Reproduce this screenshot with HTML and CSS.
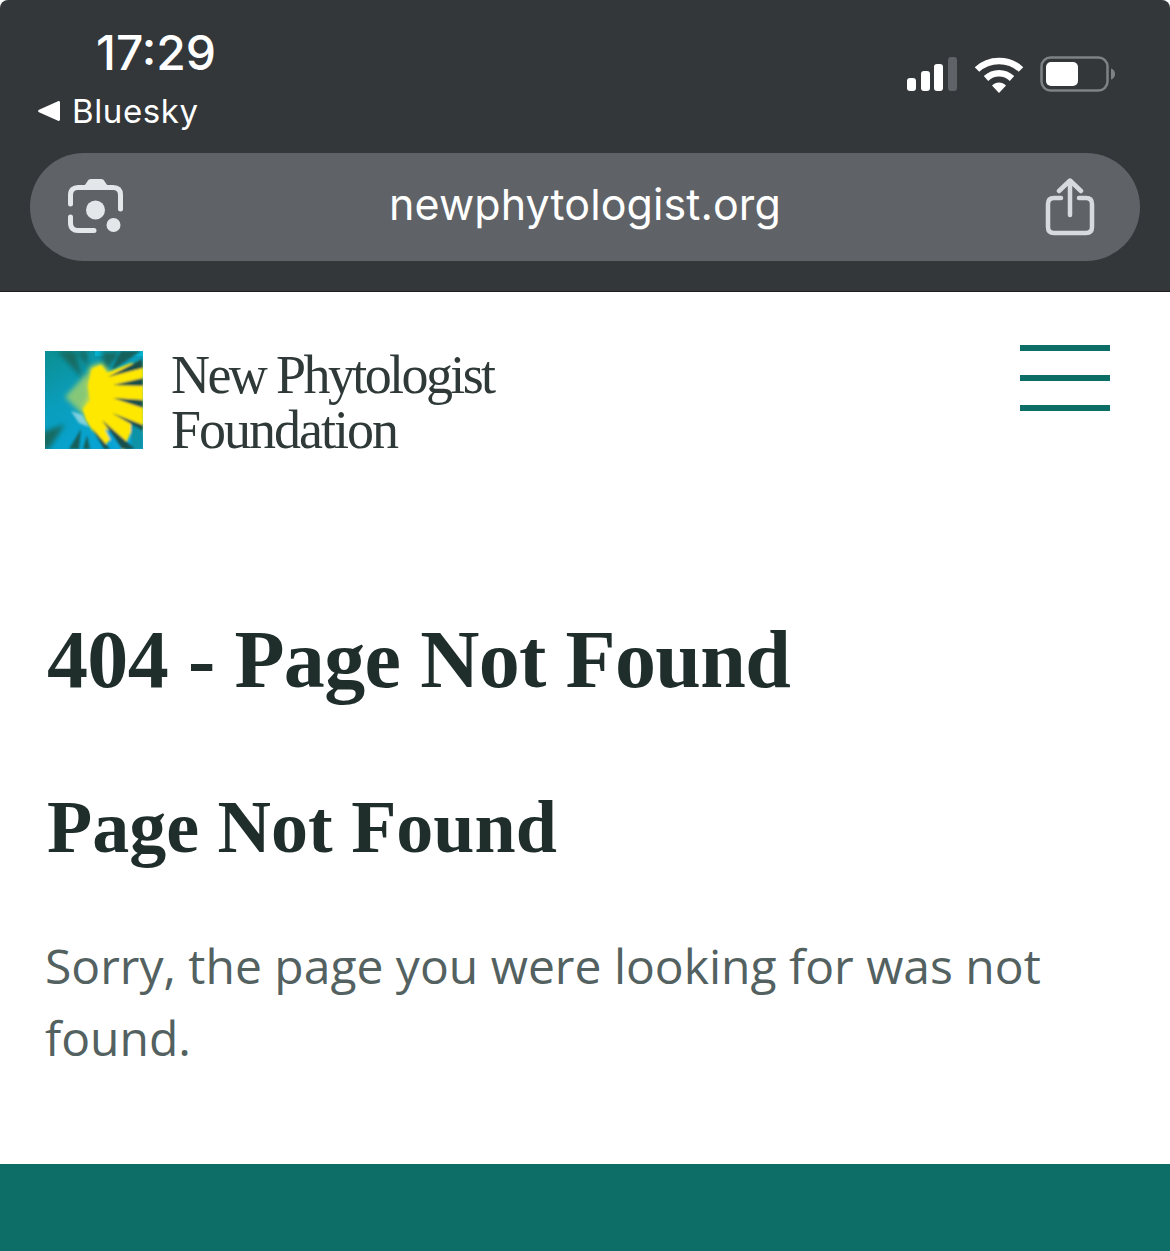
FILE: index.html
```html
<!DOCTYPE html>
<html lang="en">
<head>
  <meta charset="UTF-8">
  <title>Page Not Found</title>
  <meta name="viewport" content="width=device-width, initial-scale=1">
  <link rel="stylesheet" href="styles.css">
</head>
<body>
  <div class="browser">
    <div class="status">
      <div class="status-left">
        <div class="time">17:29</div>
        <div class="back">
          <svg class="back-arrow" width="22" height="22" viewBox="0 0 22 22"><path d="M22 2.500v17c0 1.200-1 1.800-2 1.300L1 12.200c-1.200-.6-1.200-1.800 0-2.400L20 1.200c1-.5 2 .1 2 1.300z" fill="#fff"/></svg>
          <span>Bluesky</span>
        </div>
      </div>
      <div class="status-right">
        <svg width="52" height="36" viewBox="0 0 52 36">
          <rect x="1" y="22" width="9" height="13" rx="3" fill="#fff"/>
          <rect x="15" y="15" width="9" height="20" rx="3" fill="#fff"/>
          <rect x="28" y="8" width="9" height="27" rx="3" fill="#fff"/>
          <rect x="42" y="1" width="9" height="34" rx="3" fill="#5f6367"/>
        </svg>
        <svg class="wifi" width="50" height="38" viewBox="0 0 50 38">
          <path d="M3 13.500C15 2 35 2 47 13.500" fill="none" stroke="#fff" stroke-width="6.500"/>
          <path d="M12 22.500C19.500 15.500 30.500 15.500 38 22.500" fill="none" stroke="#fff" stroke-width="6.500"/>
          <path d="M18 29.500C22 25.500 28 25.500 32 29.500L25 37z" fill="#fff"/>
        </svg>
        <svg class="battery" width="76" height="36" viewBox="0 0 76 36">
          <rect x="1.500" y="1.500" width="66" height="33" rx="9" fill="none" stroke="#7e8285" stroke-width="2.500"/>
          <rect x="6" y="6" width="32" height="24" rx="5" fill="#fff"/>
          <path d="M71 12.500c2.500.6 4 2.800 4 5.500s-1.500 4.900-4 5.500z" fill="#7e8285"/>
        </svg>
      </div>
    </div>
    <div class="address">
      <svg width="58" height="56" viewBox="0 0 58 56">
        <path d="M15 10l5-7c1-2 2-3 4-3h10c2 0 3 1 4 3l5 7z" fill="#e4e7ea"/>
        <path d="M3.500 25V16c0-5 3-7.500 7.500-7.500h35c5 0 7.500 2.500 7.500 7.500v14" fill="none" stroke="#e4e7ea" stroke-width="5" stroke-linecap="round"/>
        <path d="M3.500 38v6c0 5 3 7.500 7.500 7.500h16" fill="none" stroke="#e4e7ea" stroke-width="5" stroke-linecap="round"/>
        <circle cx="28.500" cy="31" r="9.500" fill="#e4e7ea"/>
        <circle cx="46.500" cy="46" r="7" fill="#e4e7ea"/>
      </svg>
      <span class="url">newphytologist.org</span>
      <svg width="50" height="58" viewBox="0 0 50 58">
        <path d="M16 20H9c-4 0-6 2-6 6v23c0 4 2 6 6 6h32c4 0 6-2 6-6V26c0-4-2-6-6-6h-7" fill="none" stroke="#d6d9de" stroke-width="4.500" stroke-linecap="round"/>
        <path d="M25 37V3M14 13L25 2.500 36 13" fill="none" stroke="#d6d9de" stroke-width="4.500" stroke-linecap="round" stroke-linejoin="round"/>
      </svg>
    </div>
  </div>

  <header class="site-head">
    <a class="brand" href="#">
      <svg class="logo" width="98" height="98" viewBox="0 0 98 98">
        <defs>
          <linearGradient id="sky" x1="0" y1="0" x2=".6" y2="1">
            <stop offset="0" stop-color="#0c8f90"/>
            <stop offset=".45" stop-color="#0a9dbb"/>
            <stop offset="1" stop-color="#07a5d6"/>
          </linearGradient>
          <filter id="soft"><feGaussianBlur stdDeviation="1.300"/></filter>
          <filter id="softer"><feGaussianBlur stdDeviation="2.800"/></filter>
          <clipPath id="square"><rect width="98" height="98"/></clipPath>
        </defs>
        <g clip-path="url(#square)">
          <rect width="98" height="98" fill="url(#sky)"/>
          <rect x="50" width="48" height="5" fill="#06b4d2"/>
          <g filter="url(#softer)" fill="#176a62">
            <path d="M12 0h18l8 28z"/>
            <path d="M32 0h10l1 18z"/>
            <path d="M56 0h22L60 20z"/>
            <path d="M-4 82l24-9L4 98h-8z"/>
          </g>
          <g filter="url(#soft)" fill="#14605c">
            <path d="M76 0h20L66 20z"/>
            <path d="M24 98l12-20-2 20z"/>
            <path d="M38 98l4-14 3 14z"/>
          </g>
          <path d="M20 46l22-24 10 44-16-4z" fill="#86c878" filter="url(#softer)"/>
          <path d="M26 60l12 4 6 12-10-4z" fill="#7fd0de" filter="url(#soft)"/>
          <path d="M45 16l12-4 8 10 33-10v72l-14-4-6 12-10-14-10 8-16-18-4-12 6-10-2-15z" fill="#d8e23a" filter="url(#softer)"/>
          <g filter="url(#soft)">
            <path d="M47 18l9-4 6 8 24-10 12 4v70l-12-6-8 20-10-14-8 8-13-15-6-10-3-11 7-8-2-15 2-9z" fill="#ffe800"/>
            <path d="M60 78l10 20h22L70 82z" fill="#07a5d6"/>
            <path d="M86 70l12 6v22H86z" fill="#0c93a8"/>
            <g fill="#134f4c">
              <path d="M63 26L97 8l1 9z"/>
              <path d="M68 34l30-7v8z"/>
              <path d="M68 47l30 2v8z"/>
              <path d="M67 62l31 12v6z"/>
              <path d="M57 69l33 29H77z"/>
              <path d="M47 77l18 21h-6z"/>
            </g>
          </g>
        </g>
      </svg>
      <span class="wordmark"><span class="line-one">New Phytologist</span><span class="line-two">Foundation</span></span>
    </a>
    <button class="burger" aria-label="Menu"><i></i><i></i><i></i></button>
  </header>

  <main class="content">
    <h1>404 - Page Not Found</h1>
    <h2>Page Not Found</h2>
    <p>Sorry, the page you were looking for was not found.</p>
  </main>

  <footer class="site-foot"></footer>
</body>
</html>
```

FILE: styles.css
```css
html, body {
  margin: 0;
  height: 100%;
}
body {
  display: flex;
  flex-direction: column;
  height: 1251px;
  overflow: hidden;
  background: #fff;
  font-family: "Open Sans", sans-serif;
}
.browser {
  height: 292px;
  box-sizing: border-box;
  background: #33373a;
  border-top-left-radius: 8px;
  border-top-right-radius: 8px;
  border-bottom: 1px solid #1c1e20;
  padding: 0 30px;
  flex-shrink: 0;
}
.status {
  display: flex;
  justify-content: space-between;
  height: 153px;
}
.status-left {
  padding: 25px 0 0 8px;
}
.time {
  font-family: Inter, sans-serif;
  font-size: 48px;
  font-weight: 500;
  line-height: 56px;
  color: #fff;
  padding-left: 58px;
}
.back {
  display: flex;
  align-items: center;
  gap: 12px;
  margin-top: 8px;
  font-family: Inter, sans-serif;
  font-size: 33px;
  line-height: 44px;
  letter-spacing: .6px;
  color: #fff;
}
.status-right {
  display: flex;
  align-items: flex-start;
  gap: 16px;
  padding: 56px 24px 0 0;
}
.address {
  height: 108px;
  border-radius: 54px;
  background: #5f6367;
  display: flex;
  align-items: center;
  justify-content: space-between;
  padding: 0 45px 0 37px;
}
.url {
  font-family: Inter, sans-serif;
  font-size: 43px;
  line-height: 50px;
  letter-spacing: .1px;
  margin-bottom: 6px;
  color: #fff;
}
.site-head {
  display: flex;
  justify-content: space-between;
  align-items: flex-start;
  padding: 53px 60px 0 45px;
  flex-shrink: 0;
}
.brand {
  display: flex;
  align-items: center;
  gap: 28px;
  text-decoration: none;
  margin-top: 6px;
  height: 98px;
}
.wordmark {
  font-family: "Liberation Serif", serif;
  font-size: 54px;
  line-height: 55px;
  color: #2f3a38;
  padding-top: 6px;
}
.line-one, .line-two {
  display: block;
}
.line-one {
  letter-spacing: -2.600px;
}
.line-two {
  letter-spacing: -2px;
}
.burger {
  display: flex;
  flex-direction: column;
  gap: 24px;
  width: 90px;
  padding: 0;
  border: none;
  background: none;
}
.burger i {
  display: block;
  height: 6px;
  background: #0d6e67;
}
.content {
  flex: 1;
  padding: 0 45px;
}
h1, h2 {
  font-family: "Liberation Serif", serif;
  font-weight: 700;
  color: #1f2e2a;
  margin: 0;
  padding-left: 2px;
}
h1 {
  font-size: 82px;
  line-height: 90px;
  letter-spacing: -.65px;
  margin-top: 166px;
}
h2 {
  font-size: 74px;
  line-height: 84px;
  margin-top: 80px;
}
p {
  font-size: 48px;
  line-height: 72px;
  color: #536161;
  margin: 61px 0 0;
}
.site-foot {
  height: 87px;
  background: #0d6e67;
  flex-shrink: 0;
}
```
